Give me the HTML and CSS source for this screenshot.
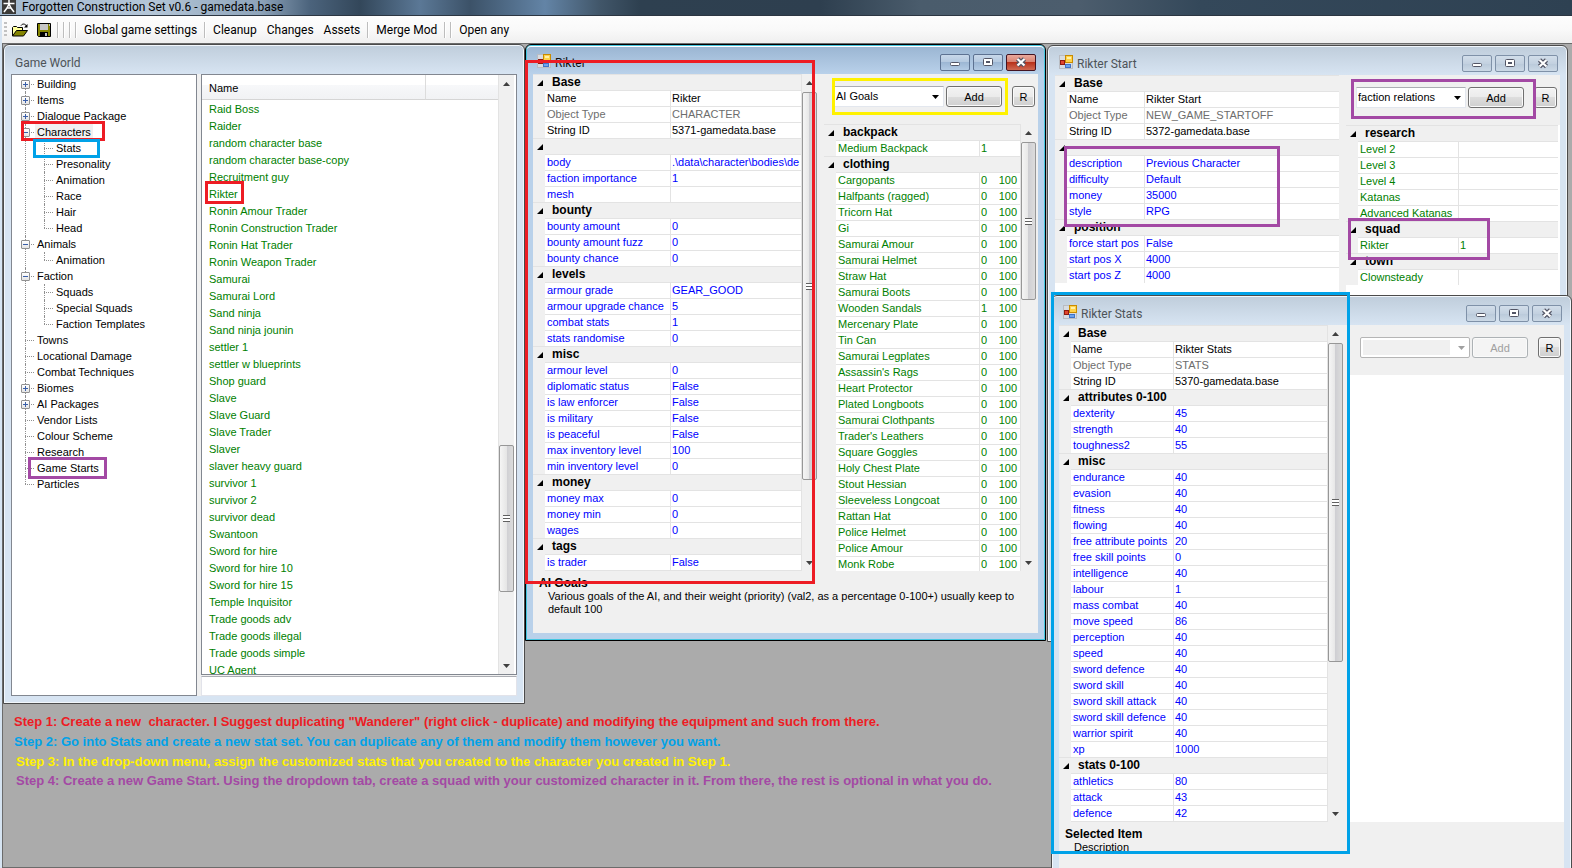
FILE: index.html
```html
<!DOCTYPE html>
<html lang="en">
<head>
<meta charset="utf-8">
<title>Forgotten Construction Set v0.6 - gamedata.base</title>
<link rel="stylesheet" href="styles.css">
</head>

<body>

<!-- shared icons -->
<svg class="defs" aria-hidden="true">
	<symbol id="i-form" viewBox="0 0 14 14">
		<rect x="0.5" y="0.5" width="13" height="13" fill="#d8dce2" stroke="#b9bcc2"/>
		<rect x="6.5" y="0.5" width="7" height="7" fill="#ffd24a" stroke="#c98b00"/>
		<rect x="8" y="2" width="4" height="2" fill="#fff0a8"/>
		<rect x="1.5" y="5.5" width="4" height="4" fill="#e0452f" stroke="#8e1a10"/>
		<rect x="6.5" y="9.5" width="5" height="3" fill="#6fa4ee" stroke="#3f74c8"/>
	</symbol>
	<symbol id="i-min" viewBox="0 0 30 17">
		<rect x="10.5" y="8.5" width="9" height="3" rx="1" fill="#fff" stroke="#535666"/>
	</symbol>
	<symbol id="i-max" viewBox="0 0 30 17">
		<rect x="10.5" y="4.5" width="9" height="7" rx="1" fill="#fff" stroke="#535666"/>
		<rect x="13.5" y="7.5" width="3" height="1" fill="#fff" stroke="#535666"/>
	</symbol>
	<symbol id="i-close" viewBox="0 0 30 17">
		<path d="M11.5 5L18.5 11.5M18.5 5L11.5 11.5" stroke="#535666" stroke-width="4.5"/>
		<path d="M11.5 5L18.5 11.5M18.5 5L11.5 11.5" stroke="#fff" stroke-width="2.2"/>
	</symbol>
</svg>

<header class="appbar">
	<svg class="appicon" viewBox="0 0 14 14" aria-hidden="true">
		<rect width="14" height="14" fill="#3b3a38"/>
		<path d="M7 0V5M1.5 3.5H12.5M7 4L5 8L2 12M7 4L9 8L12 12M4.5 8H9.5" fill="none" stroke="#fff" stroke-width="1.5"/>
	</svg>
	<h1>Forgotten Construction Set v0.6 - gamedata.base</h1>
</header>

<nav class="toolbar">
	<i class="grip"></i>
	<button class="tool icon" aria-label="Open">
		<svg width="17" height="14" viewBox="0 0 17 14">
			<path d="M0.5 13V4.5L1.5 3.5H4.5L5.5 4.5H10.5V7" fill="#ffff9c" stroke="#000"/>
			<path d="M0.5 13L4.5 7.5H15.5L11.5 13Z" fill="#848400" stroke="#000"/>
			<path d="M9 2.5C10.5 0.5 13 0.5 14.5 3" fill="none" stroke="#000"/>
			<path d="M15.5 1V4.5H12Z" fill="#000"/>
		</svg>
	</button>
	<button class="tool icon" aria-label="Save">
		<svg width="14" height="14" viewBox="0 0 14 14">
			<path d="M0.5 0.5H13.5V13.5H1.5L0.5 12.5Z" fill="#848400" stroke="#000"/>
			<rect x="3" y="1" width="8" height="6" fill="#c6c6c6"/>
			<rect x="3" y="9" width="8" height="5" fill="#000"/>
			<rect x="8" y="10" width="2" height="3" fill="#c6c6c6"/>
			<rect x="12" y="1" width="1" height="2" fill="#c6c6c6"/>
		</svg>
	</button>
	<i class="sep"></i><i class="sep"></i><i class="sep"></i><i class="sep"></i>
	<button class="tool">Global game settings</button>
	<i class="sep"></i>
	<button class="tool">Cleanup</button>
	<button class="tool">Changes</button>
	<button class="tool">Assets</button>
	<i class="sep"></i>
	<button class="tool">Merge Mod</button>
	<i class="sep"></i><i class="sep"></i>
	<button class="tool">Open any</button>
</nav>

<main class="mdi">

<!-- Game World ------------------------------------------------------------>

<section class="window world">
	<div class="caption"><h2>Game World</h2></div>
	<div class="browser">
		<div class="treepane"><ul class="tree" id="tree"></ul></div>
		<div class="listpane">
			<div class="listview">
				<table class="items">
					<thead><tr><th class="colname">Name</th><th></th></tr></thead>
					<tbody id="items"></tbody>
				</table>
				<div class="scroll s-list"><b class="up"></b><i class="thumb"></i><b class="down"></b></div>
			</div>
			<input class="filter" type="text" aria-label="Filter">
		</div>
	</div>
</section>

<!-- Rikter Start ---------------------------------------------------------->

<section class="window start">
	<div class="caption">
		<svg class="formicon"><use href="#i-form"/></svg>
		<h2>Rikter Start</h2>
		<button class="cap" aria-label="Minimize"><svg><use href="#i-min"/></svg></button>
		<button class="cap" aria-label="Maximize"><svg><use href="#i-max"/></svg></button>
		<button class="cap" aria-label="Close"><svg><use href="#i-close"/></svg></button>
	</div>
	<div class="client">
		<div class="panes">
			<div class="left"><table class="grid" id="start-props"></table></div>
			<div class="right">
				<div class="adder">
					<span class="combo"><select aria-label="Category"><option>faction relations</option></select></span>
					<button class="btn add">Add</button>
					<button class="btn reset">R</button>
				</div>
				<div class="refs"><table class="grid" id="start-refs"></table></div>
			</div>
		</div>
		<div class="help"></div>
	</div>
</section>

<!-- Rikter Stats ---------------------------------------------------------->

<section class="window stats">
	<div class="caption">
		<svg class="formicon"><use href="#i-form"/></svg>
		<h2>Rikter Stats</h2>
		<button class="cap" aria-label="Minimize"><svg><use href="#i-min"/></svg></button>
		<button class="cap" aria-label="Maximize"><svg><use href="#i-max"/></svg></button>
		<button class="cap" aria-label="Close"><svg><use href="#i-close"/></svg></button>
	</div>
	<div class="client">
		<div class="panes">
			<div class="left">
				<table class="grid" id="stats-props"></table>
				<div class="scroll s-stats"><b class="up"></b><i class="thumb"></i><b class="down"></b></div>
			</div>
			<div class="right">
				<div class="adder">
					<span class="combo off"><select aria-label="Category" disabled><option></option></select></span>
					<button class="btn add" disabled>Add</button>
					<button class="btn reset">R</button>
				</div>
				<div class="refs"></div>
			</div>
		</div>
		<div class="help"><h3>Selected Item</h3><p>Description</p></div>
	</div>
</section>

<!-- Rikter ---------------------------------------------------------------->

<section class="window rikter active">
	<div class="caption">
		<svg class="formicon"><use href="#i-form"/></svg>
		<h2>Rikter</h2>
		<button class="cap" aria-label="Minimize"><svg><use href="#i-min"/></svg></button>
		<button class="cap" aria-label="Maximize"><svg><use href="#i-max"/></svg></button>
		<button class="cap close" aria-label="Close"><svg><use href="#i-close"/></svg></button>
	</div>
	<div class="client">
		<div class="panes">
			<div class="left">
				<table class="grid" id="char-props"></table>
				<div class="scroll s-props"><b class="up"></b><i class="thumb"></i><b class="down"></b></div>
			</div>
			<div class="right">
				<div class="adder">
					<span class="combo"><select aria-label="Category"><option>AI Goals</option></select></span>
					<button class="btn add">Add</button>
					<button class="btn reset">R</button>
				</div>
				<div class="refs">
					<table class="grid" id="char-refs"></table>
					<div class="scroll s-refs"><b class="up"></b><i class="thumb"></i><b class="down"></b></div>
				</div>
			</div>
		</div>
		<div class="help">
			<h3>AI Goals</h3>
			<p>Various goals of the AI, and their weight (priority) (val2, as a percentage 0-100+) usually keep to default 100</p>
		</div>
	</div>
</section>

<!-- tutorial notes -------------------------------------------------------->

<div class="steps">
	<p class="red">Step 1: Create a new&nbsp; character. I Suggest duplicating "Wanderer" (right click - duplicate) and modifying the equipment and such from there.</p>
	<p class="blue">Step 2: Go into Stats and create a new stat set. You can duplicate any of them and modify them however you want.</p>
	<p class="yellow">Step 3: In the drop-down menu, assign the customized stats that you created to the character you created in Step 1.</p>
	<p class="purple">Step 4: Create a new Game Start. Using the dropdown tab, create a squad with your customized character in it. From there, the rest is optional in what you do.</p>
</div>

<i class="mark red m-characters"></i>
<i class="mark blue m-stats"></i>
<i class="mark purple m-starts"></i>
<i class="mark red m-rikter"></i>
<i class="mark red m-props"></i>
<i class="mark yellow m-goals"></i>
<i class="mark purple m-desc"></i>
<i class="mark purple m-relations"></i>
<i class="mark purple m-squad"></i>
<i class="mark blue m-statset"></i>

</main>

<script>
// name, state (+ collapsed, - expanded), children
var tree = [
	['Building', '+'], ['Items', '+'], ['Dialogue Package', '+'],
	['Characters', '-', ['Stats', 'Presonality', 'Animation', 'Race', 'Hair', 'Head']],
	['Animals', '-', ['Animation']],
	['Faction', '-', ['Squads', 'Special Squads', 'Faction Templates']],
	['Towns'], ['Locational Damage'], ['Combat Techniques'],
	['Biomes', '+'], ['AI Packages', '+'],
	['Vendor Lists'], ['Colour Scheme'], ['Research'], ['Game Starts'], ['Particles']
];

var items = ['Raid Boss', 'Raider', 'random character base', 'random character base-copy',
	'Recruitment guy', 'Rikter', 'Ronin Amour Trader', 'Ronin Construction Trader',
	'Ronin Hat Trader', 'Ronin Weapon Trader', 'Samurai', 'Samurai Lord', 'Sand ninja',
	'Sand ninja jounin', 'settler 1', 'settler w blueprints', 'Shop guard', 'Slave',
	'Slave Guard', 'Slave Trader', 'Slaver', 'slaver heavy guard', 'survivor 1',
	'survivor 2', 'survivor dead', 'Swantoon', 'Sword for hire', 'Sword for hire 10',
	'Sword for hire 15', 'Temple Inquisitor', 'Trade goods adv', 'Trade goods illegal',
	'Trade goods simple', 'UC Agent'];

// a string is a category, an array is [name, value, value2]
var charProps = ['Base', ['Name', 'Rikter'], ['Object Type', 'CHARACTER'], ['String ID', '5371-gamedata.base'],
	'', ['body', '.\\data\\character\\bodies\\de'], ['faction importance', 1], ['mesh', ''],
	'bounty', ['bounty amount', 0], ['bounty amount fuzz', 0], ['bounty chance', 0],
	'levels', ['armour grade', 'GEAR_GOOD'], ['armour upgrade chance', 5], ['combat stats', 1], ['stats randomise', 0],
	'misc', ['armour level', 0], ['diplomatic status', 'False'], ['is law enforcer', 'False'],
	['is military', 'False'], ['is peaceful', 'False'], ['max inventory level', 100], ['min inventory level', 0],
	'money', ['money max', 0], ['money min', 0], ['wages', 0],
	'tags', ['is trader', 'False'], ['', '']];

var charRefs = ['backpack', ['Medium Backpack', 1, ''], 'clothing'];
['Cargopants', 'Halfpants (ragged)', 'Tricorn Hat', 'Gi', 'Samurai Amour', 'Samurai Helmet', 'Straw Hat',
	'Samurai Boots', 'Wooden Sandals', 'Mercenary Plate', 'Tin Can', 'Samurai Legplates', "Assassin's Rags",
	'Heart Protector', 'Plated Longboots', 'Samurai Clothpants', "Trader's Leathers", 'Square Goggles',
	'Holy Chest Plate', 'Stout Hessian', 'Sleeveless Longcoat', 'Rattan Hat', 'Police Helmet',
	'Police Amour', 'Monk Robe'].forEach(function (n) {
	charRefs.push([n, n == 'Wooden Sandals' ? 1 : 0, 100]);
});

var startProps = ['Base', ['Name', 'Rikter Start'], ['Object Type', 'NEW_GAME_STARTOFF'], ['String ID', '5372-gamedata.base'],
	'', ['description', 'Previous Character'], ['difficulty', 'Default'], ['money', 35000], ['style', 'RPG'],
	'position', ['force start pos', 'False'], ['start pos X', 4000], ['start pos Z', 4000]];

var startRefs = ['research', ['Level 2', ''], ['Level 3', ''], ['Level 4', ''], ['Katanas', ''], ['Advanced Katanas', ''],
	'squad', ['Rikter', 1], 'town', ['Clownsteady', '']];

var statsProps = ['Base', ['Name', 'Rikter Stats'], ['Object Type', 'STATS'], ['String ID', '5370-gamedata.base'],
	'attributes 0-100', ['dexterity', 45], ['strength', 40], ['toughness2', 55],
	'misc', ['endurance', 40], ['evasion', 40], ['fitness', 40], ['flowing', 40], ['free attribute points', 20],
	['free skill points', 0], ['intelligence', 40], ['labour', 1], ['mass combat', 40], ['move speed', 86],
	['perception', 40], ['speed', 40], ['sword defence', 40], ['sword skill', 40], ['sword skill attack', 40],
	['sword skill defence', 40], ['warrior spirit', 40], ['xp', 1000],
	'stats 0-100', ['athletics', 80], ['attack', 43], ['defence', 42], ['', '']];

function $(id) { return document.getElementById(id); }

function fillGrid(id, rows, width, color) {
	var s = '<colgroup><col class="gutter"><col style="width:' + width + 'px"><col></colgroup>', cat = '', cls;
	rows.forEach(function (r) {
		if (typeof r == 'string') {
			cat = r;
			s += '<tr class="cat"><td class="gutter"><i class="tri"></i></td><th colspan="2">' + r + '</th></tr>';
			return;
		}
		cls = cat == 'Base' ? (r[0] == 'Object Type' ? 'dim' : 'base') : color;
		s += '<tr class="' + cls + '"><td class="gutter"></td><td>' + r[0] + '</td><td class="val">' +
			(r.length > 2 ? '<span class="pair"><span>' + r[1] + '</span><span>' + r[2] + '</span></span>' : r[1]) +
			'</td></tr>';
	});
	$(id).innerHTML = s;
}

function node(n) {
	return '<li><span class="node">' +
		(n[1] ? '<i class="toggle' + (n[1] == '+' ? ' plus' : '') + '"></i>' : '<i class="leaf"></i>') +
		'<span class="name' + (n[0] == 'Characters' ? ' sel' : '') + '">' + n[0] + '</span></span>' +
		(n[2] ? '<ul>' + n[2].map(function (c) { return node([c]); }).join('') + '</ul>' : '') + '</li>';
}

$('tree').innerHTML = tree.map(node).join('');
$('items').innerHTML = items.map(function (n) { return '<tr><td>' + n + '</td><td></td></tr>'; }).join('');
fillGrid('char-props', charProps, 125, 'prop');
fillGrid('char-refs', charRefs, 143, 'ref');
fillGrid('start-props', startProps, 77, 'prop');
fillGrid('start-refs', startRefs, 100, 'ref');
fillGrid('stats-props', statsProps, 102, 'prop');
</script>

</body>
</html>
```
FILE: styles.css
```css
* {box-sizing:border-box;}
html, body {height:100%;}
body {
	margin:0; display:flex; flex-direction:column; position:relative; overflow:hidden;
	font-family:"Liberation Sans", Arial, sans-serif; font-size:11px; background:#d6e4f2;
}
h1, h2, h3, p, ul {margin:0; padding:0; font-weight:normal;}
ul {list-style:none;}
button, select, input {font:inherit; margin:0; padding:0;}
svg {display:block;}
.defs {position:absolute; width:0; height:0;}

/* application title and toolbar */
.appbar {
	flex:none; height:16px; display:flex; align-items:flex-start; gap:6px; padding-left:2px;
	border-bottom:1px solid #2c3642;
	background:linear-gradient(90deg, #a3bad0 0, #b4c6d8 150px, #8ea4ba 260px, #4b637c 310px, #33475a 360px,
		#5b7896 420px, #3c5268 470px, #6384a6 545px, #415669 600px, #2e4050 640px, #2e3f4f 820px,
		#4a5c6c 920px, #4c5d6d 1080px, #34485a 1200px, #2e4152 1572px);
}
.appicon {width:14px; height:14px;}
.appbar h1 {font-family:Roboto, sans-serif; font-size:12px; line-height:14px; color:#000; white-space:nowrap;}
.toolbar {
	flex:none; height:27px; display:flex; align-items:center; margin-left:2px; padding-left:2px;
	background:linear-gradient(#fdfdfd, #f9f9f9 50%, #efefef); font-family:Roboto, sans-serif; font-size:12px;
}
.tool {border:0; background:none; line-height:16px; padding:0 5px; white-space:nowrap;}
.tool.icon {padding:0 4px;}
.grip {width:3px; height:16px; margin-right:1px; background:repeating-linear-gradient(#c2c2c2 0 2px, transparent 2px 4px);}
.sep {width:1px; height:16px; margin:0 3px 0 2px; background:#bdbdbd; box-shadow:1px 0 #fff;}

.mdi {flex:1; margin-left:2px; border:1px solid #6b6b6b; border-right:0; background:#ababab;}

/* child windows */
.window {
	position:absolute; width:521px; height:597px; display:flex; flex-direction:column; padding:0 7px 7px;
	border:1px solid #4b4b4b; border-radius:6px 6px 0 0;
	background:linear-gradient(#bfcddb, #d7e4f2 29px); box-shadow:inset 0 0 0 1px #f2f7fc;
}
.world {left:3px; top:44px; width:522px; height:660px;}
.rikter {left:525px; top:44px;}
.start {left:1047px; top:45px;}
.stats {left:1051px; top:295px;}
.active {
	border-color:#000; box-shadow:inset 0 0 0 1px #43c6e0, inset 0 2px #fff;
	background:linear-gradient(#99b4d1, #b9d1ea 29px);
}
.caption {flex:none; height:29px; display:flex; gap:3px; padding:9px 2px 0 4px; color:#4d5358;}
.caption h2 {flex:1; font-family:Roboto, sans-serif; font-size:12px; line-height:18px; padding-left:1px;}
.world .caption h2 {padding-left:0;}
.active .caption {color:#101010;}
.formicon {width:14px; height:14px;}
.cap {
	width:30px; height:17px; border:1px solid #7f91a8; border-radius:2px;
	background:linear-gradient(#d2deea, #c3d1e0 50%, #b9c9da 50%, #ccd9e6);
}
.cap svg {width:30px; height:17px; margin:-1px;}
.active .cap {border-color:#5d7291; background:linear-gradient(#c8d8ea, #b3c8df 50%, #9db7d4 50%, #b3cbe4);}
.active .cap.close {border-color:#431422; background:linear-gradient(#e9a99c, #d8806f 50%, #b8321c 50%, #cf6a53);}

.client {flex:1; min-height:0; display:flex; flex-direction:column; background:#f0f0f0;}
.panes {flex:1; min-height:0; display:flex; gap:7px;}
.left {width:284px; display:flex; overflow:hidden;}
.start .left, .refs {background:#fff;}
.right {flex:1; min-width:0; display:flex; flex-direction:column;}
.refs {flex:1; min-height:0; display:flex; overflow:hidden; padding-right:2px;}
.rikter .refs {background:#f0f0f0;}
.help {flex:none; height:62px; padding:6px 0 0 6px; line-height:13px; overflow:hidden;}
.help h3 {font-size:12px; font-weight:bold;}
.help p {padding-left:9px;}

/* property grid */
.grid {flex:1; align-self:flex-start; width:0; min-width:0; table-layout:fixed; border-spacing:0; background:#fff;}
.grid tr {height:16px;}
.grid td, .grid th {
	height:16px; padding:0 0 0 2px; border-top:1px solid #e3e3e3; line-height:15px; text-align:left;
	white-space:nowrap; overflow:hidden;
}
.grid .gutter {width:12px; padding:0; background:#f0f0f0; border-color:#f0f0f0;}
.grid .cat .gutter {border-color:#e3e3e3;}
.grid th {padding-left:7px; background:#f0f0f0; font-size:12px; font-weight:bold;}
.grid .val {border-left:1px solid #e3e3e3; padding-left:1px;}
.tri {display:block; width:6px; height:6px; margin:1px 0 0 4px; background:#000; clip-path:polygon(100% 0, 100% 100%, 0 100%);}
.dim {color:#6d6d6d;}
.prop {color:#00f;}
.ref {color:#008000;}
.pair {display:flex; justify-content:space-between; padding-right:3px;}

/* scroll bars */
.scroll {flex:none; width:16px; display:flex; flex-direction:column; align-items:center; background:#f0f0f0; border-left:1px solid #e3e3e3;}
.scroll b {width:7px; height:4px; background:#404040;}
.up {margin:7px 0; clip-path:polygon(50% 0, 100% 100%, 0 100%);}
.down {margin:auto 0 6px; clip-path:polygon(0 0, 100% 0, 50% 100%);}
.thumb {
	width:15px; border:1px solid #979797; border-radius:2px;
	background:
		repeating-linear-gradient(#606060 0 1px, #fff 1px 3px) center / 7px 7px no-repeat,
		linear-gradient(90deg, #f5f5f5, #e6e6e6 50%, #cfcfd3 50%, #dcdcdc);
}
.s-list .thumb {height:147px; margin-top:352px;}
.s-props .thumb {height:388px;}
.s-refs .thumb {height:158px;}
.s-stats .thumb {height:319px;}

/* drop-down with its buttons */
.adder {flex:none; height:50px; display:flex; align-items:flex-start; padding:12px 0 0 10px;}
.combo {position:relative; width:110px; margin-right:2px;}
.combo select {
	width:100%; height:21px; padding:0 0 1px 1px; appearance:none; border:1px solid #e3e7ee; border-top-color:#abadb3;
	border-radius:0; background:#fff; color:#000;
}
.combo::after {
	content:""; position:absolute; right:5px; top:9px; width:7px; height:4px; background:#000;
	clip-path:polygon(0 0, 100% 0, 50% 100%); pointer-events:none;
}
.combo.off select {border:1px solid #b5b5b5; border-radius:2px; background:linear-gradient(#f0f0f0, #f0f0f0) 2px 2px / 87px 15px no-repeat #fff; opacity:1;}
.combo.off::after {background:#a0a0a0;}
.btn {height:21px; border:1px solid #707070; border-radius:3px; background:linear-gradient(#f3f3f3, #ebebeb 50%, #dddddd 50%, #cfcfcf); box-shadow:inset 0 0 0 1px #fafafa; color:#000;}
.btn:disabled {border-color:#adb2b5; background:#f4f4f4; color:#a0a0a0;}
.add {width:56px; margin-right:10px;}
.reset {width:23px;}

/* Game World */
.browser {flex:1; min-height:0; display:flex; gap:4px; background:#f0f0f0;}
.treepane {width:186px; border:1px solid #828790; background:#fff; padding:1px 0 0 9px; overflow:hidden;}
.tree li {position:relative;}
.tree li::before {content:""; position:absolute; left:4px; top:0; bottom:0; border-left:1px dotted #909090;}
.tree > li:first-child::before {top:8px;}
.tree li:last-child::before {bottom:auto; height:8px;}
.tree ul {padding-left:19px;}
.node {position:relative; height:16px; display:flex; align-items:center;}
.node::before {content:""; position:absolute; left:4px; top:8px; width:9px; border-top:1px dotted #909090;}
.toggle, .leaf {width:9px; height:9px; margin-right:5px; flex:none;}
.toggle {
	position:relative; border:1px solid #919191; border-radius:1px;
	background:linear-gradient(#3a5fa8, #3a5fa8) center / 5px 1px no-repeat, linear-gradient(#fff, #e4e4e4);
}
.toggle.plus {background:linear-gradient(#3a5fa8, #3a5fa8) center / 5px 1px no-repeat, linear-gradient(#3a5fa8, #3a5fa8) center / 1px 5px no-repeat, linear-gradient(#fff, #e4e4e4);}
.name {padding:0 2px; line-height:16px; white-space:nowrap;}
.name.sel {background:#f0f0f0;}

.listpane {flex:1; min-width:0; display:flex; flex-direction:column; gap:1px;}
.listview {flex:1; min-height:0; display:flex; overflow:hidden; border:1px solid #828790; background:#fff; padding-right:2px;}
.items {flex:1; align-self:flex-start; table-layout:fixed; width:0; border-spacing:0;}
.items th {height:25px; padding:1px 0 0 7px; text-align:left; font-weight:normal; border-bottom:1px solid #d5d5d5; background:linear-gradient(#fff 40%, #f7f8fa 40%, #f1f2f4);}
.items .colname {width:224px; border-right:1px solid #dcdcdc;}
.items td {height:17px; padding:1px 0 0 7px; line-height:16px; color:#008000; white-space:nowrap;}
.filter {flex:none; width:100%; height:20px; border:1px solid #e2e3ea; border-top-color:#abadb3; background:#fff; padding:0 4px;}

/* notes and frames drawn over the windows */
.steps {position:absolute; left:14px; top:712px; font-size:13px; line-height:20px; white-space:nowrap;}
.steps p {font-weight:bold;}
.steps .yellow, .steps .purple {padding-left:2px;}
.steps .purple {line-height:18px;}
.red {color:#ed1c24;}
.blue {color:#00a2e8;}
.yellow {color:#fff200;}
.purple {color:#a349a4;}
.mark {position:absolute; border:3px solid;}
.m-characters {left:21px; top:121px; width:84px; height:20px;}
.m-stats {left:33px; top:139px; width:67px; height:19px;}
.m-starts {left:28px; top:457px; width:79px; height:22px;}
.m-rikter {left:205px; top:181px; width:39px; height:23px;}
.m-props {left:525px; top:60px; width:290px; height:524px;}
.m-goals {left:832px; top:78px; width:176px; height:37px;}
.m-desc {left:1064px; top:146px; width:216px; height:81px;}
.m-relations {left:1351px; top:79px; width:185px; height:40px;}
.m-squad {left:1348px; top:218px; width:142px; height:42px;}
.m-statset {left:1051px; top:292px; width:299px; height:562px;}
```
